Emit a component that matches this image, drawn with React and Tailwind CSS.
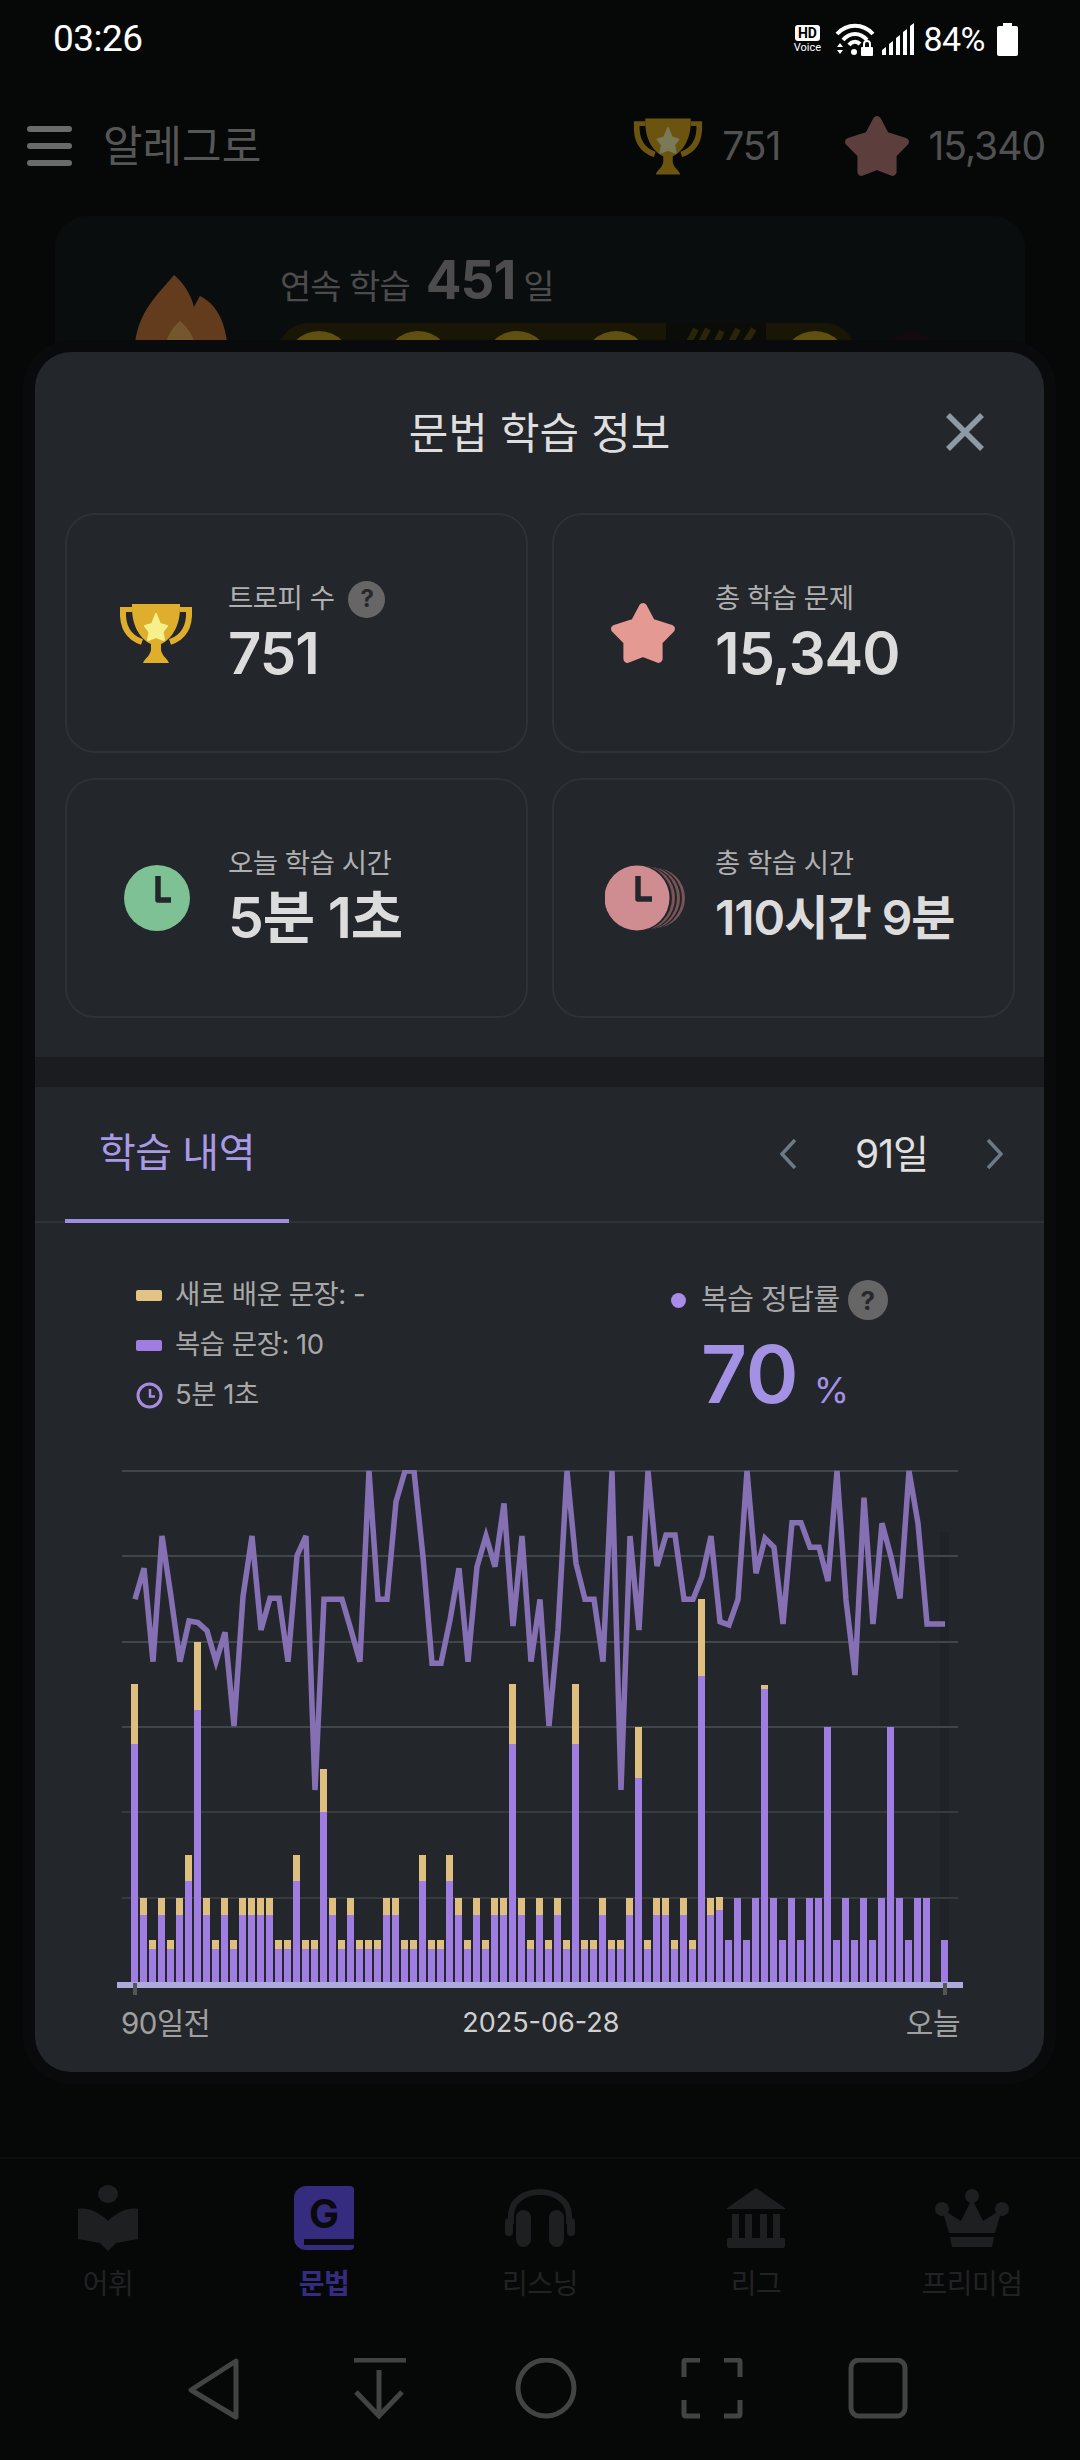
import React from "react";

const L1 = [33, 42];
const L2 = [67, 84];
const L3 = [101, 127];
const BIG = [238, 298];
const p = (h) => [h, h];

// purple height, total height
const BARS = [
  BIG, L2, L1, L2, L1, L2, L3, [272, 340], L2, L1,
  L2, L1, L2, L2, L2, L2, L1, L1, L3, L1,
  L1, [170, 213], L2, L1, L2, L1, L1, L1, L2, L2,
  L1, L1, L3, L1, L1, L3, L2, L1, L2, L1,
  L2, L2, BIG, L2, L1, L2, L1, L2, L1, BIG,
  L1, L1, L2, L1, L1, L2, [204, 255], L1, L2, L2,
  L1, L2, L1, [306, 383], L2, [72, 85], p(42), p(84), p(42), p(84),
  [293, 297], p(84), p(42), p(84), p(42), p(84), p(84), p(255), p(42), p(84),
  p(42), p(84), p(42), p(84), p(255), p(84), p(42), p(84), p(84), p(0),
  p(42),
];

// y in 3x zoom units from y=1440
const LINE = [
  478, 385, 665, 288, 470, 665, 543, 548, 572, 665,
  577, 858, 470, 288, 570, 475, 475, 665, 347, 288,
  1050, 478, 478, 478, 570, 665, 93, 478, 478, 185,
  93, 93, 350, 670, 670, 540, 385, 665, 380, 288,
  380, 190, 558, 288, 665, 478, 858, 570, 93, 370,
  478, 478, 665, 93, 1050, 288, 570, 93, 378, 285,
  285, 478, 478, 410, 288, 545, 555, 478, 93, 400,
  295, 322, 552, 248, 248, 322, 322, 423, 93, 480,
  705, 173, 552, 250, 350, 475, 93, 250, 552, 552,
  552,
];

const GRID = [1471, 1556, 1642, 1727, 1812, 1898];

function Chart() {
  // viewBox uses screen coordinates
  const points = LINE.map((y, i) => `${135 + 9 * i},${1440 + y / 3}`).join(" ");
  return (
    <svg className="block ml-[65px] w-[880px] h-[540px]" viewBox="100 1460 880 540">
      <rect x="940" y="1532" width="9" height="450" fill="#1f2226" />
      {GRID.map((y) => (
        <line key={y} x1="122" x2="958" y1={y} y2={y} stroke={y > 1750 ? "#363b3e" : "#41464a"} strokeWidth="2" />
      ))}
      {BARS.map(([purple, total], i) => (
        <g key={i}>
          <rect x={131 + 9 * i} y={1982 - total} width="7" height={total - purple} fill="#dfbf80" />
          <rect x={131 + 9 * i} y={1982 - purple} width="7" height={purple} fill="#a07de0" />
        </g>
      ))}
      <rect x="117" y="1982" width="846" height="6" fill="#aeaadb" />
      <rect x="133" y="1983" width="4" height="12" fill="#555" />
      <rect x="943" y="1983" width="4" height="12" fill="#555" />
      <clipPath id="plot">
        <rect x="100" y="1470" width="880" height="530" />
      </clipPath>
      <polyline clipPath="url(#plot)" points={points} fill="none" stroke="#8670b4" strokeWidth="5.5" />
    </svg>
  );
}

function Trophy({ className, cup, star }) {
  return (
    <svg className={className} viewBox="0 0 76 62">
      <path d="M5 8 C4 26 12 36 24 40 M71 8 C72 26 64 36 52 40" fill="none" stroke={cup} strokeWidth="6" />
      <path d="M14 2 H62 V6 C62 26 52 38 43 42 V48 C44 54 49 56 51 61 H25 C27 56 32 54 33 48 V42 C24 38 14 26 14 6 Z" fill={cup} />
      <path d="M2 5 H14 V10 H2 Z M62 5 H74 V10 H62 Z" fill={cup} />
      <path d="M38 12 L42 22 L49 24 L44.5 30 L46 38 L38 35 L30 38 L31.5 30 L27 24 L34 22 Z" fill={star} stroke={star} strokeWidth="2" strokeLinejoin="round" />
    </svg>
  );
}

function Star({ className, fill }) {
  return (
    <svg className={className} viewBox="0 0 64 60">
      <path
        d="M32 5 L24 20 L5 26 L17 38 L17 55 L32 49 L47 55 L47 38 L59 26 L40 20 Z"
        fill={fill}
        stroke={fill}
        strokeWidth="8"
        strokeLinejoin="round"
      />
    </svg>
  );
}

function Help({ size = "w-[37px] h-[37px] text-[24px]" }) {
  return (
    <span className={`${size} rounded-full bg-[#666666] text-[#26282b] font-bold flex items-center justify-center`}>?</span>
  );
}

function StatCard({ icon, label, help, value, valueClass = "text-[58px]" }) {
  return (
    <div className="h-[240px] rounded-[30px] border-2 border-[#2e3135] flex items-center pl-[51px]">
      <div className="w-[110px] flex items-center shrink-0">{icon}</div>
      <div className="flex flex-col">
        <div className="flex items-center gap-[14px] h-[40px] text-[27.5px] tracking-[-0.5px] text-[#b0b0b0]">
          {label}
          {help && <Help />}
        </div>
        <div className={`${valueClass} h-[68px] leading-[68px] font-semibold tracking-[-1px] text-[#dcdcdc] whitespace-nowrap`}>{value}</div>
      </div>
    </div>
  );
}

function StatusBar() {
  return (
    <div className="h-[76px] flex items-center justify-between pl-[53px] pr-[62px] pt-[2px] text-white">
      <span className="text-[37px] tracking-[-0.5px] font-['Roboto',sans-serif]">03:26</span>
      <div className="flex items-center">
        <div className="w-[32px] flex flex-col items-center leading-none font-['Roboto',sans-serif]">
          <span className="bg-white text-black rounded-[3px] text-[14px] font-bold px-[3px] leading-[16px]">HD</span>
          <span className="text-[11px] mt-[1px]">Voice</span>
        </div>
        <svg className="ml-[12px] w-[40px] h-[34px]" viewBox="0 0 40 34">
          <path d="M2 12 C12 1 28 1 38 12 M8 18 C15 10 25 10 32 18 M14 23 C17 19 22 19 25 22" fill="none" stroke="#fff" strokeWidth="4" />
          <circle cx="19" cy="30" r="3" fill="#fff" />
          <path d="M2 25 L5 21 L8 25 Z M2 28 L5 32 L8 28 Z" fill="#fff" />
          <rect x="26" y="25" width="12" height="9" rx="1" fill="#fff" />
          <path d="M29 25 V22 C29 18 35 18 35 22 V25" fill="none" stroke="#fff" strokeWidth="2" />
        </svg>
        <svg className="ml-[7px] w-[32px] h-[32px]" viewBox="0 0 32 32" fill="#fff">
          <path d="M0 32 V27 L4 24 V32 Z M7 32 V21 L11 18 V32 Z M14 32 V15 L18 12 V32 Z M21 32 V9 L25 6 V32 Z M28 32 V3 L32 0 V32 Z" />
        </svg>
        <span className="ml-[9px] text-[34px] tracking-[-0.5px] font-['Roboto',sans-serif]">84%</span>
        <svg className="ml-[12px] w-[21px] h-[33px]" viewBox="0 0 21 33" fill="#fff">
          <rect x="6" y="0" width="9" height="4" />
          <rect x="0" y="3" width="21" height="30" rx="2" />
        </svg>
      </div>
    </div>
  );
}

function Header() {
  return (
    <div className="h-[70px] mt-[35px] pl-[27px] pr-[35px] flex items-center">
      <div className="w-[45px] h-[40px] flex flex-col justify-between">
        <div className="h-[6px] rounded-full bg-[#6a6a6a]" />
        <div className="h-[6px] rounded-full bg-[#6a6a6a]" />
        <div className="h-[6px] rounded-full bg-[#6a6a6a]" />
      </div>
      <span className="ml-[31px] text-[43px] text-[#565656]">알레그로</span>
      <Trophy className="ml-auto w-[72px] h-[60px]" cup="#6b5410" star="#7a7a58" />
      <span className="ml-[18px] text-[39px] tracking-[-1px] text-[#515151]">751</span>
      <Star className="ml-[64px] w-[66px] h-[62px]" fill="#5c3f3c" />
      <span className="ml-[18px] text-[39px] tracking-[-1px] text-[#515151]">15,340</span>
    </div>
  );
}

function StreakCard() {
  const coin = (x) => (
    <div key={x} className="w-[66px] h-[66px] mt-[8px] shrink-0 rounded-full bg-[#5f5010] flex items-center justify-center">
      <div className="w-[46px] h-[46px] rounded-full bg-[#6b5a12]" />
    </div>
  );
  return (
    <div className="mx-[55px] mt-[35px] h-[300px] rounded-[32px] bg-[#0a0d0e] flex pl-[79px] pt-[40px]">
      <svg className="w-[94px] h-[120px] mt-[19px]" viewBox="0 0 94 120">
        <path d="M40 0 C50 8 57 20 60 32 C62 28 64 24 66 21 C84 30 94 50 94 84 C94 104 74 120 47 120 C20 120 0 104 0 84 C0 40 20 24 40 0 Z" fill="#633c1e" />
        <path d="M46 46 C54 52 65 68 65 90 C65 104 56 112 46 112 C36 112 28 104 28 90 C28 68 38 52 46 46 Z" fill="#74562f" />
      </svg>
      <div className="ml-[52px]">
        <div className="flex items-baseline h-[48px] leading-[48px]">
          <span className="text-[34px] tracking-[-1px] text-[#4c4c4c]">연속 학습</span>
          <span className="ml-[16px] text-[53px] font-bold tracking-[-1px] text-[#4c4c4c]">451</span>
          <span className="ml-[8px] text-[34px] text-[#4c4c4c]">일</span>
        </div>
        <div className="mt-[18px] -ml-[2px] flex items-center">
          <div className="relative flex items-start h-[70px] w-[577px] rounded-t-[30px] bg-[#1a1606] pl-[8px] gap-[33px] overflow-hidden">
            {[1, 2, 3, 4].map(coin)}
            <svg className="w-[100px] h-[70px] shrink-0 -ml-[16px] -mr-[17px] bg-[#0b0b08]" viewBox="0 0 100 70">
              <path d="M12 40 L30 6 M24 40 L42 6 M40 40 L56 8 M54 40 L72 6 M66 40 L88 6" stroke="#2a2408" strokeWidth="6" fill="none" />
            </svg>
            {coin(5)}
          </div>
          <div className="ml-[25px] w-[62px] h-[62px] mt-[10px] rounded-full bg-[#120a0e]" />
        </div>
      </div>
    </div>
  );
}

function Modal() {
  return (
    <div className="absolute left-[35px] top-[352px] w-[1009px] h-[1720px] rounded-[36px] bg-[#23262a] shadow-[0_0_0_12px_#080a0b]">
      <div className="relative h-[161px] flex items-center justify-center pt-[2px]">
        <span className="text-[43px] text-[#dedede]">문법 학습 정보</span>
        <svg className="absolute left-[910px] top-[60px] w-[40px] h-[40px]" viewBox="0 0 40 40">
          <path d="M3 3 L37 37 M37 3 L3 37" stroke="#8d9aa5" strokeWidth="5.5" fill="none" />
        </svg>
      </div>

      <div className="pl-[30px] pr-[29px] grid grid-cols-2 gap-x-[24px] gap-y-[25px]">
        <StatCard
          icon={<Trophy className="w-[76px] h-[62px]" cup="#dfae2c" star="#f6f08c" />}
          label="트로피 수"
          help
          value="751"
        />
        <StatCard
          icon={<Star className="ml-[5px] w-[66px] h-[62px]" fill="#e49a92" />}
          label="총 학습 문제"
          value="15,340"
        />
        <StatCard
          icon={
            <svg className="ml-[6px] w-[66px] h-[66px]" viewBox="0 0 66 66">
              <circle cx="33" cy="33" r="33" fill="#7ec195" />
              <path d="M34 11 V35 H47" fill="none" stroke="#23262a" strokeWidth="5.5" strokeLinejoin="round" />
            </svg>
          }
          label="오늘 학습 시간"
          value="5분 1초"
          valueClass="text-[57px]"
        />
        <StatCard
          icon={
            <svg className="w-[82px] h-[66px]" viewBox="0 0 82 66">
              <circle cx="50" cy="33" r="30" fill="#7a5557" />
              <circle cx="46" cy="33" r="31" fill="#23262a" />
              <circle cx="44" cy="33" r="31" fill="#7a5557" />
              <circle cx="40" cy="33" r="32" fill="#23262a" />
              <circle cx="38" cy="33" r="32" fill="#7a5557" />
              <circle cx="34" cy="33" r="33" fill="#23262a" />
              <circle cx="32" cy="33" r="32.5" fill="#cf8d91" />
              <path d="M33 11 V34 H47" fill="none" stroke="#23262a" strokeWidth="5.5" strokeLinejoin="round" />
            </svg>
          }
          label="총 학습 시간"
          value="110시간 9분"
          valueClass="text-[48px]"
        />
      </div>

      <div className="mt-[39px] h-[30px] bg-[#1a1c1f]" />

      <div className="h-[136px] flex items-stretch border-b-2 border-[#2f3236]">
        <div className="ml-[30px] w-[224px] flex items-center justify-center border-b-4 border-[#a08ce0] -mb-[2px] text-[40px] tracking-[-0.5px] text-[#a99ae8]">
          학습 내역
        </div>
        <div className="ml-auto pr-[40px] flex items-center">
          <svg className="w-[18px] h-[32px]" viewBox="0 0 18 32">
            <path d="M16 2 L3 16 L16 30" fill="none" stroke="#6b7a85" strokeWidth="3.5" />
          </svg>
          <span className="w-[189px] text-center text-[39px] tracking-[-1px] text-[#e0e0e0]">91일</span>
          <svg className="w-[18px] h-[32px]" viewBox="0 0 18 32">
            <path d="M2 2 L15 16 L2 30" fill="none" stroke="#6b7a85" strokeWidth="3.5" />
          </svg>
        </div>
      </div>

      <div className="h-[237px] pl-[101px] pt-[52px] flex">
        <div className="w-[535px] flex flex-col gap-[10px] text-[27.5px] tracking-[-0.5px] text-[#a8a8a8]">
          <div className="h-[40px] flex items-center">
            <span className="w-[26px] h-[11px] rounded-[2px] bg-[#e2c285] mr-[13px]" />새로 배운 문장: -
          </div>
          <div className="h-[40px] flex items-center">
            <span className="w-[26px] h-[11px] rounded-[2px] bg-[#a07de0] mr-[13px]" />복습 문장: 10
          </div>
          <div className="h-[40px] flex items-center">
            <svg className="w-[27px] h-[27px] mr-[12px]" viewBox="0 0 27 27">
              <circle cx="13.5" cy="13.5" r="11.5" fill="none" stroke="#a98be0" strokeWidth="3" />
              <path d="M14 7 V14.5 H19" fill="none" stroke="#a98be0" strokeWidth="2.5" />
            </svg>
            5분 1초
          </div>
        </div>
        <div className="flex flex-col">
          <div className="h-[40px] mt-[5px] flex items-center text-[29px] tracking-[-0.5px] text-[#a8a8a8]">
            <span className="w-[15px] h-[15px] rounded-full bg-[#a98be8] mr-[15px]" />복습 정답률
            <span className="ml-[8px]"><Help size="w-[40px] h-[40px] text-[26px]" /></span>
          </div>
          <div className="ml-[30px] h-[84px] flex items-baseline text-[#a391e4] mt-[12px]">
            <span className="text-[80px] leading-[84px] font-semibold">70</span>
            <span className="ml-[15px] text-[36px]">%</span>
          </div>
        </div>
      </div>

      <Chart />

      <div className="pl-[86px] pr-[84px] mt-[1px] flex items-center">
        <span className="text-[29.5px] tracking-[-0.5px] text-[#a0a0a0]">90일전</span>
        <span className="ml-[252px] text-[27px] text-[#d0d0d0]">2025-06-28</span>
        <span className="ml-auto text-[30px] tracking-[-0.5px] text-[#a0a0a0]">오늘</span>
      </div>
    </div>
  );
}

function BottomNav() {
  const c = "#1e1f20";
  const items = [
    {
      label: "어휘",
      icon: (
        <svg className="w-[60px] h-[66px]" viewBox="0 0 60 66" fill={c}>
          <ellipse cx="30" cy="9" rx="10" ry="9" />
          <path d="M0 24 C10 22 22 28 30 36 C38 28 50 22 60 24 V54 L38 58 L30 66 L22 58 L0 54 Z" />
        </svg>
      ),
    },
    {
      label: "문법",
      active: true,
      icon: (
        <div className="relative w-[60px] h-[64px] rounded-l-[12px] rounded-tr-[4px] rounded-br-[4px] bg-[#352c80] flex justify-center pt-[6px] text-[40px] leading-[44px] font-bold text-[#0a0a0c]">
          G
          <div className="absolute left-[10px] right-0 bottom-[5px] h-[6px] bg-[#0a0a0c]" />
        </div>
      ),
    },
    {
      label: "리스닝",
      icon: (
        <svg className="w-[70px] h-[60px]" viewBox="0 0 70 60">
          <path d="M6 36 V28 C6 -4 64 -4 64 28 V36" fill="none" stroke={c} strokeWidth="6" />
          <rect x="11" y="22" width="15" height="37" rx="7.5" fill={c} />
          <rect x="44" y="22" width="15" height="37" rx="7.5" fill={c} />
          <rect x="0" y="30" width="8" height="18" rx="4" fill={c} />
          <rect x="62" y="30" width="8" height="18" rx="4" fill={c} />
        </svg>
      ),
    },
    {
      label: "리그",
      icon: (
        <svg className="w-[58px] h-[60px]" viewBox="0 0 58 60" fill={c}>
          <path d="M29 0 L58 20 V21 H0 V20 Z" />
          <rect x="5" y="26" width="7" height="24" />
          <rect x="18" y="26" width="7" height="24" />
          <rect x="33" y="26" width="7" height="24" />
          <rect x="46" y="26" width="7" height="24" />
          <rect x="0" y="50" width="58" height="10" rx="2" />
        </svg>
      ),
    },
    {
      label: "프리미엄",
      icon: (
        <svg className="w-[74px] h-[58px]" viewBox="0 0 74 58" fill={c}>
          <circle cx="37" cy="7" r="7" />
          <circle cx="7" cy="20" r="7" />
          <circle cx="67" cy="20" r="7" />
          <path d="M37 10 L48 32 L67 20 L60 44 H14 L7 20 L26 32 Z" />
          <path d="M15 48 H59 L57 58 H17 Z" />
        </svg>
      ),
    },
  ];
  return (
    <div className="mt-auto">
      <div className="h-[177px] border-t-2 border-[#0c0e0f] grid grid-cols-5 pt-[26px]">
        {items.map((it) => (
          <div key={it.label} className="flex flex-col items-center">
            <div className="h-[66px] flex items-center justify-center">{it.icon}</div>
            <span className={`mt-[12px] text-[28px] tracking-[-0.5px] ${it.active ? "font-bold text-[#352c80]" : "text-[#212223]"}`}>
              {it.label}
            </span>
          </div>
        ))}
      </div>
      <div className="h-[126px] pl-[188px] flex text-[#434343]">
        <svg className="w-[730px] h-[62px] mt-[24px]" viewBox="188 2358 730 62" fill="none" stroke="currentColor" strokeWidth="5">
          <path d="M236 2361 L191 2390 L236 2417 Z" strokeLinejoin="round" />
          <path d="M354 2360 H406 M379 2370 V2416 M356 2392 L379 2416 L402 2392" />
          <ellipse cx="546" cy="2388" rx="28" ry="28" />
          <path d="M684 2377 V2362 Q684 2360 686 2360 H700 M740 2377 V2362 Q740 2360 738 2360 H724 M684 2400 V2414 Q684 2416 686 2416 H700 M740 2400 V2414 Q740 2416 738 2416 H724" />
          <rect x="851" y="2360" width="54" height="56" rx="8" />
        </svg>
      </div>
    </div>
  );
}

export default function App() {
  return (
    <div className="relative w-[1080px] h-[2460px] overflow-hidden bg-[#060808] flex flex-col font-['Inter','Noto_Sans_CJK_KR',sans-serif]">
      <StatusBar />
      <Header />
      <StreakCard />
      <Modal />
      <BottomNav />
    </div>
  );
}
